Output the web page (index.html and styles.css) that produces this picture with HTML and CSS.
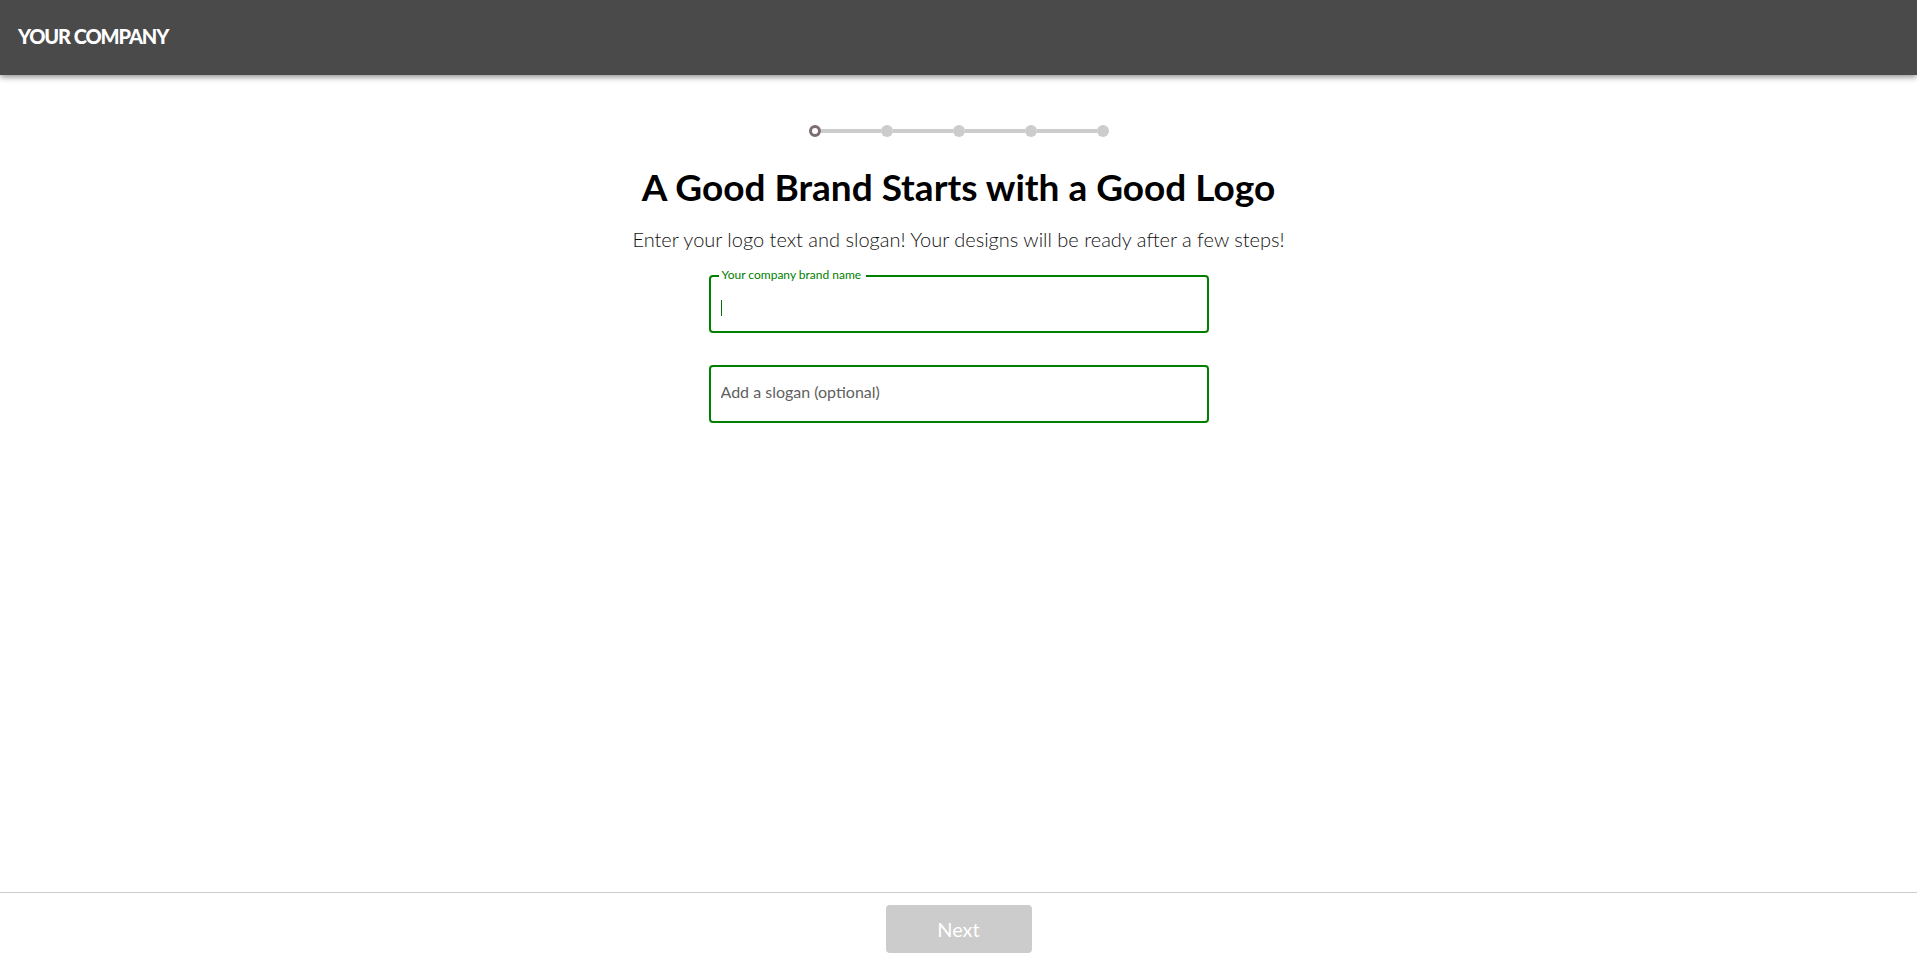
FILE: index.html
```html
<!DOCTYPE html>
<html lang="en">

<head>
    <meta charset="UTF-8">
    <meta name="viewport" content="width=device-width, initial-scale=1.0">
    <title>Logo Maker</title>
    <link rel="stylesheet" href="styles.css">
</head>

<body>
    <header class="topbar">
        <div class="brand">YOUR COMPANY</div>
    </header>

    <main class="wizard">
        <!-- steps -->
        <div class="steps">
            <span class="dot current"></span>
            <span class="bar"></span>
            <span class="dot"></span>
            <span class="bar"></span>
            <span class="dot"></span>
            <span class="bar"></span>
            <span class="dot"></span>
            <span class="bar"></span>
            <span class="dot"></span>
        </div>

        <h1>A Good Brand Starts with a Good Logo</h1>
        <p class="lead">Enter your logo text and slogan! Your designs will be ready after a few steps!</p>

        <div class="field">
            <label for="brand" class="field-label">Your company brand name</label>
            <input id="brand" type="text" class="field-input first" autofocus>
            <span class="caret"></span>
        </div>

        <div class="field">
            <input id="slogan" type="text" class="field-input second" placeholder="Add a slogan (optional)">
        </div>
    </main>

    <footer class="actions">
        <button class="next" disabled>Next</button>
    </footer>
</body>

</html>
```

FILE: styles.css
```css
body {
    font-family: 'Lato', 'Liberation Sans', sans-serif;
    margin: 0;
    min-height: 100vh;
    display: flex;
    flex-direction: column;
    background: #fff;
    color: #000;
}

/* header */
.topbar {
    height: 75px;
    background-color: #4a4a4a;
    box-shadow: 0 2px 6px rgba(0, 0, 0, 0.45);
    display: flex;
    align-items: center;
    padding-left: 18px;
    position: relative;
    z-index: 1;
}

.brand {
    color: #fff;
    font-weight: 900;
    font-size: 20px;
    letter-spacing: -1.1px;
    margin-top: -4px;
}

/* main */
.wizard {
    flex: 1;
    display: flex;
    flex-direction: column;
    align-items: center;
    padding-top: 50px;
}

.steps {
    display: flex;
    align-items: center;
    height: 12px;
}

.dot {
    width: 12px;
    height: 12px;
    border-radius: 50%;
    background: #cccccc;
    box-sizing: border-box;
}

.dot.current {
    background: #fff;
    border: 3px solid #7b6d72;
}

.bar {
    width: 60px;
    height: 4px;
    background: #cccccc;
}

h1 {
    font-size: 37px;
    line-height: 44px;
    font-weight: bold;
    margin: 28px 0 0;
}

.lead {
    font-size: 20px;
    font-weight: 300;
    line-height: 24px;
    color: #111;
    margin: 18px 0 24px;
}

.field {
    position: relative;
    width: 500px;
    margin-bottom: 32px;
}

.field-input {
    display: block;
    width: 100%;
    height: 58px;
    box-sizing: border-box;
    border: 2px solid #008000;
    border-radius: 4px;
    padding: 0 10px;
    font-family: 'Lato', 'Liberation Sans', sans-serif;
    font-size: 16px;
    color: #333;
    caret-color: #0a6b0a;
    outline: none;
    background: #fff;
}

.field-input.first {
    padding-top: 6px;
}

.field-input.second {
    padding-bottom: 5px;
}

.field-input::placeholder {
    color: #5f5f5f;
}

.field-label {
    position: absolute;
    top: -7px;
    left: 10px;
    padding: 0 5px 0 3px;
    background: #fff;
    color: #008000;
    font-size: 12px;
    line-height: 14px;
}

/* fake caret, focused field */
.caret {
    position: absolute;
    left: 12px;
    top: 25px;
    width: 1px;
    height: 16px;
    background: #0a6b0a;
}

/* footer */
.actions {
    height: 72px;
    box-sizing: border-box;
    border-top: 1px solid #cccccc;
    display: flex;
    justify-content: center;
    padding-top: 12px;
}

.next {
    width: 146px;
    height: 48px;
    border: none;
    border-radius: 4px;
    background: #cccccc;
    color: #fff;
    font-family: 'Lato', 'Liberation Sans', sans-serif;
    font-size: 20px;
}
```
